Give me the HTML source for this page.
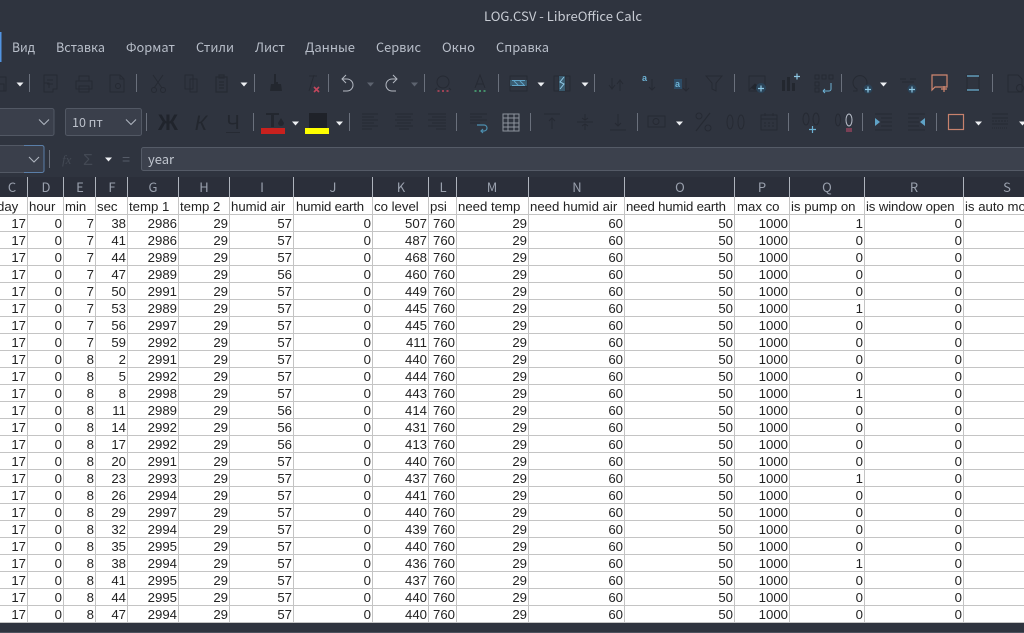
<!DOCTYPE html>
<html lang="ru"><head><meta charset="utf-8"><title>LOG.CSV - LibreOffice Calc</title>
<style>
html,body{margin:0;padding:0;width:1024px;height:633px;overflow:hidden;background:#2f343f}
#gridwrap{position:absolute;left:0;top:197px;width:1024px;height:426px;overflow:hidden;background:#fff}
table{position:absolute;left:-4px;top:0;border-collapse:separate;border-spacing:0;table-layout:fixed;width:1064px;font:13.2px/14px "Liberation Sans",sans-serif;color:#222}
td{box-sizing:border-box;height:17px;padding:2px 1px 0 1px;border-right:1px solid #c4c4c4;border-bottom:1px solid #c4c4c4;text-align:right;white-space:nowrap;overflow:hidden;vertical-align:top}
tr.h td{height:18px;text-align:left;padding-top:3px}
svg{position:absolute;left:0;top:0}
.i{fill:none;stroke:#262a33;stroke-width:1}
.s{fill:#23272f;stroke:none}
.sep{stroke:#6a707c;stroke-width:1}
.dd{fill:#eef0f3}
.ddd{fill:#5d636f}
.m{font:13px "Noto Sans CJK JP","Liberation Sans",sans-serif;fill:#b8bec9}
.hd{font:13px "Noto Sans CJK JP","Liberation Sans",sans-serif;fill:#99a0ad;text-anchor:middle}
</style></head><body>
<div id="gridwrap"><table>
<colgroup><col style="width:32px"><col style="width:36px"><col style="width:32px"><col style="width:32px"><col style="width:51px"><col style="width:51px"><col style="width:64px"><col style="width:79px"><col style="width:56px"><col style="width:28px"><col style="width:72px"><col style="width:96px"><col style="width:110px"><col style="width:55px"><col style="width:75px"><col style="width:99px"><col style="width:100px"></colgroup>
<tr class="h"><td>day</td><td>hour</td><td>min</td><td>sec</td><td>temp 1</td><td>temp 2</td><td>humid air</td><td style="letter-spacing:-.15px;padding-left:2px">humid earth</td><td>co level</td><td>psi</td><td>need temp</td><td>need humid air</td><td style="letter-spacing:-.18px">need humid earth</td><td style="padding-left:2px">max co</td><td>is pump on</td><td style="letter-spacing:-.12px">is window open</td><td>is auto mode</td></tr>
<tr><td>17</td><td>0</td><td>7</td><td>38</td><td>2986</td><td>29</td><td>57</td><td>0</td><td>507</td><td>760</td><td>29</td><td>60</td><td>50</td><td>1000</td><td>1</td><td>0</td><td></td></tr>
<tr><td>17</td><td>0</td><td>7</td><td>41</td><td>2986</td><td>29</td><td>57</td><td>0</td><td>487</td><td>760</td><td>29</td><td>60</td><td>50</td><td>1000</td><td>0</td><td>0</td><td></td></tr>
<tr><td>17</td><td>0</td><td>7</td><td>44</td><td>2989</td><td>29</td><td>57</td><td>0</td><td>468</td><td>760</td><td>29</td><td>60</td><td>50</td><td>1000</td><td>0</td><td>0</td><td></td></tr>
<tr><td>17</td><td>0</td><td>7</td><td>47</td><td>2989</td><td>29</td><td>56</td><td>0</td><td>460</td><td>760</td><td>29</td><td>60</td><td>50</td><td>1000</td><td>0</td><td>0</td><td></td></tr>
<tr><td>17</td><td>0</td><td>7</td><td>50</td><td>2991</td><td>29</td><td>57</td><td>0</td><td>449</td><td>760</td><td>29</td><td>60</td><td>50</td><td>1000</td><td>0</td><td>0</td><td></td></tr>
<tr><td>17</td><td>0</td><td>7</td><td>53</td><td>2989</td><td>29</td><td>57</td><td>0</td><td>445</td><td>760</td><td>29</td><td>60</td><td>50</td><td>1000</td><td>1</td><td>0</td><td></td></tr>
<tr><td>17</td><td>0</td><td>7</td><td>56</td><td>2997</td><td>29</td><td>57</td><td>0</td><td>445</td><td>760</td><td>29</td><td>60</td><td>50</td><td>1000</td><td>0</td><td>0</td><td></td></tr>
<tr><td>17</td><td>0</td><td>7</td><td>59</td><td>2992</td><td>29</td><td>57</td><td>0</td><td>411</td><td>760</td><td>29</td><td>60</td><td>50</td><td>1000</td><td>0</td><td>0</td><td></td></tr>
<tr><td>17</td><td>0</td><td>8</td><td>2</td><td>2991</td><td>29</td><td>57</td><td>0</td><td>440</td><td>760</td><td>29</td><td>60</td><td>50</td><td>1000</td><td>0</td><td>0</td><td></td></tr>
<tr><td>17</td><td>0</td><td>8</td><td>5</td><td>2992</td><td>29</td><td>57</td><td>0</td><td>444</td><td>760</td><td>29</td><td>60</td><td>50</td><td>1000</td><td>0</td><td>0</td><td></td></tr>
<tr><td>17</td><td>0</td><td>8</td><td>8</td><td>2998</td><td>29</td><td>57</td><td>0</td><td>443</td><td>760</td><td>29</td><td>60</td><td>50</td><td>1000</td><td>1</td><td>0</td><td></td></tr>
<tr><td>17</td><td>0</td><td>8</td><td>11</td><td>2989</td><td>29</td><td>56</td><td>0</td><td>414</td><td>760</td><td>29</td><td>60</td><td>50</td><td>1000</td><td>0</td><td>0</td><td></td></tr>
<tr><td>17</td><td>0</td><td>8</td><td>14</td><td>2992</td><td>29</td><td>56</td><td>0</td><td>431</td><td>760</td><td>29</td><td>60</td><td>50</td><td>1000</td><td>0</td><td>0</td><td></td></tr>
<tr><td>17</td><td>0</td><td>8</td><td>17</td><td>2992</td><td>29</td><td>56</td><td>0</td><td>413</td><td>760</td><td>29</td><td>60</td><td>50</td><td>1000</td><td>0</td><td>0</td><td></td></tr>
<tr><td>17</td><td>0</td><td>8</td><td>20</td><td>2991</td><td>29</td><td>57</td><td>0</td><td>440</td><td>760</td><td>29</td><td>60</td><td>50</td><td>1000</td><td>0</td><td>0</td><td></td></tr>
<tr><td>17</td><td>0</td><td>8</td><td>23</td><td>2993</td><td>29</td><td>57</td><td>0</td><td>437</td><td>760</td><td>29</td><td>60</td><td>50</td><td>1000</td><td>1</td><td>0</td><td></td></tr>
<tr><td>17</td><td>0</td><td>8</td><td>26</td><td>2994</td><td>29</td><td>57</td><td>0</td><td>441</td><td>760</td><td>29</td><td>60</td><td>50</td><td>1000</td><td>0</td><td>0</td><td></td></tr>
<tr><td>17</td><td>0</td><td>8</td><td>29</td><td>2997</td><td>29</td><td>57</td><td>0</td><td>440</td><td>760</td><td>29</td><td>60</td><td>50</td><td>1000</td><td>0</td><td>0</td><td></td></tr>
<tr><td>17</td><td>0</td><td>8</td><td>32</td><td>2994</td><td>29</td><td>57</td><td>0</td><td>439</td><td>760</td><td>29</td><td>60</td><td>50</td><td>1000</td><td>0</td><td>0</td><td></td></tr>
<tr><td>17</td><td>0</td><td>8</td><td>35</td><td>2995</td><td>29</td><td>57</td><td>0</td><td>440</td><td>760</td><td>29</td><td>60</td><td>50</td><td>1000</td><td>0</td><td>0</td><td></td></tr>
<tr><td>17</td><td>0</td><td>8</td><td>38</td><td>2994</td><td>29</td><td>57</td><td>0</td><td>436</td><td>760</td><td>29</td><td>60</td><td>50</td><td>1000</td><td>1</td><td>0</td><td></td></tr>
<tr><td>17</td><td>0</td><td>8</td><td>41</td><td>2995</td><td>29</td><td>57</td><td>0</td><td>437</td><td>760</td><td>29</td><td>60</td><td>50</td><td>1000</td><td>0</td><td>0</td><td></td></tr>
<tr><td>17</td><td>0</td><td>8</td><td>44</td><td>2995</td><td>29</td><td>57</td><td>0</td><td>440</td><td>760</td><td>29</td><td>60</td><td>50</td><td>1000</td><td>0</td><td>0</td><td></td></tr>
<tr><td>17</td><td>0</td><td>8</td><td>47</td><td>2994</td><td>29</td><td>57</td><td>0</td><td>440</td><td>760</td><td>29</td><td>60</td><td>50</td><td>1000</td><td>0</td><td>0</td><td></td></tr>
<tr><td>&nbsp;</td><td></td><td></td><td></td><td></td><td></td><td></td><td></td><td></td><td></td><td></td><td></td><td></td><td></td><td></td><td></td><td></td></tr>
</table></div>

<svg width="1024" height="633" viewBox="0 0 1024 633" xmlns="http://www.w3.org/2000/svg">
<rect x="0" y="632" width="1024" height="1" fill="#4d525e"/>
<text x="484" y="21" textLength="158" lengthAdjust="spacingAndGlyphs" style="font:12.5px 'Noto Sans CJK JP','Liberation Sans',sans-serif;fill:#c8ccd4">LOG.CSV - LibreOffice Calc</text>
<rect x="0" y="32" width="1.5" height="30" fill="#5294e2"/>
<g class="m">
<text x="12" y="52" textLength="23" lengthAdjust="spacingAndGlyphs" class="m">Вид</text>
<text x="56" y="52" textLength="49" lengthAdjust="spacingAndGlyphs" class="m">Вставка</text>
<text x="126" y="52" textLength="49" lengthAdjust="spacingAndGlyphs" class="m">Формат</text>
<text x="196" y="52" textLength="38" lengthAdjust="spacingAndGlyphs" class="m">Стили</text>
<text x="255" y="52" textLength="30" lengthAdjust="spacingAndGlyphs" class="m">Лист</text>
<text x="305" y="52" textLength="50" lengthAdjust="spacingAndGlyphs" class="m">Данные</text>
<text x="376" y="52" textLength="45" lengthAdjust="spacingAndGlyphs" class="m">Сервис</text>
<text x="442" y="52" textLength="33" lengthAdjust="spacingAndGlyphs" class="m">Окно</text>
<text x="496" y="52" textLength="53" lengthAdjust="spacingAndGlyphs" class="m">Справка</text>
</g>

<g class="sep">
<path d="M29.5 74v18M136.5 74v18M254.5 74v18M328.5 74v18M424.5 74v18M498.5 74v18M594.5 74v18M734.5 74v18M841.5 74v18M992.5 74v18"/>
<path d="M146.5 113v18M253.5 113v18M349.5 113v18M456.5 113v18M530.5 113v18M637.5 113v18M788.5 113v18M862.5 113v18M936.5 113v18"/>
<path d="M49.5 150v18"/>
</g>

<g class="dd">
<path d="M16.5 82.5h7l-3.500 4z"/><path d="M240.500 82.500h7l-3.500 4z"/><path d="M537.500 82.500h7l-3.500 4z"/><path d="M581.500 82.500h7l-3.500 4z"/><path d="M880 82.500h7l-3.500 4z"/>
<path d="M292 121.500h7l-3.500 4z"/><path d="M336 121.500h7l-3.500 4z"/><path d="M676 121.500h7l-3.500 4z"/><path d="M975 121.500h7l-3.500 4z"/><path d="M1019 121.500h7l-3.500 4z"/>
<path d="M105 157.500h7l-3.500 4z"/>
</g>
<g class="ddd"><path d="M367 82.500h7l-3.500 4z"/><path d="M411 82.500h7l-3.500 4z"/></g>

<g class="i">
<path d="M-2 77h8v14h-8M0 84h4v7h-4"/>
<path d="M44 75h13v14h-4v3h-9zM47 80h6M47 84h6M44 83h5v5"/>
<path d="M79 76h10v5H79zM76 81h16v8H76zM79 86h10v6H79z"/>
<path d="M110 75h10l4 4v13h-14zM120 75v4h4"/><circle cx="118" cy="86" r="2.500"/>
<path d="M153 75l9 13M163 75l-9 13"/><circle cx="154" cy="90" r="2.500"/><circle cx="163" cy="90" r="2.500"/>
<path d="M185 75h8v14h-8zM190 79h7v13h-7z"/>
<path d="M216 77h11v15h-11zM219 75h5v3h-5zM219 82h5M219 85h5M219 88h5" stroke-width="1.200"/>
</g>
<path class="s" d="M274 74h2v8h2v2h3l1 7h-12l1-7h3z"/>
<path class="i" d="M314 75l-5 16M309 76h8"/>
<path d="M314 87l5 5M319 87l-5 5" stroke="#c2475d" stroke-width="1.600" fill="none"/>
<path d="M346 75l-4 4 4 4M342 79h5a6 6 0 0 1 0 12h-4" fill="none" stroke="#b4b9c2" stroke-width="1"/>
<path d="M393 75l4 4-4 4M397 79h-5a6 6 0 0 0 0 12h4" fill="none" stroke="#b4b9c2" stroke-width="1"/>
<circle class="i" cx="443" cy="82" r="6"/><path class="i" d="M437 88l-2 2M449 88l2 2"/>
<path d="M437.500 91h2M442 91h2M446.500 91h2" stroke="#c2475d" stroke-width="1.500"/>
<path class="i" d="M475 88l5-13 5 13M477 84h6"/>
<path d="M474.500 91h2M479 91h2M483.500 91h2" stroke="#4caf7a" stroke-width="1.500"/>
<path class="i" d="M510 76h17v15h-17zM510 81h17M510 86h17"/>
<rect x="510" y="80" width="17" height="6" fill="#4c8fb0" opacity=".45"/>
<path d="M512 80.500h13M512 85.500h13M514 81l4 4M520 81l4 4" stroke="#5fa3c7" fill="none"/>
<path class="i" d="M554 76h16v15h-16zM559 76v15M565 76v15"/>
<rect x="559" y="76" width="6" height="15" fill="#4c8fb0" opacity=".45"/>
<path d="M560 89l4-5-4-2 4-5" stroke="#8ec8e4" fill="none"/>
<path class="i" d="M612 78v11M609 85l3 4 3-4M620 91V80M617 84l3-4 3 4"/>
<text x="642" y="81" style="font:bold 9px 'Liberation Sans',sans-serif;fill:#6db2d4">a</text>
<path class="i" d="M652 79v11M649 87l3 3 3-3"/>
<rect x="674" y="79" width="8" height="10" fill="#2d4c66"/>
<text x="675" y="87" style="font:bold 9px 'Liberation Sans',sans-serif;fill:#6db2d4">a</text>
<path class="i" d="M686 78v13M683 88l3 3 3-3"/>
<path class="i" d="M706 76h16l-6 7v8l-4-2v-6z"/>
<path class="i" d="M749 76h16v15h-16zM749 90l6-6 4 3"/>
<path class="s" d="M751 88l4-4 3 3-3 3z"/>
<circle cx="761" cy="88" r="5" fill="#2a4358"/><path d="M758 88.500h6M761 85.500v6" stroke="#8ec8e4" stroke-width="1.200"/>
<path class="s" d="M782 80h3v11h-3zM787 77h3v14h-3zM792 83h3v8h-3z"/>
<path d="M794 76.500h6M797 73.500v6" stroke="#8ec8e4" stroke-width="1.200"/>
<path class="i" d="M815 75h4v4h-4zM822 75h4v4h-4zM829 75h4v4h-4zM815 82h4v4h-4zM815 88h4v4h-4z"/>
<path d="M823 91h6a2 2 0 0 0 2-2v-6M823 91l2-2M823 91l2 2" stroke="#6db2d4" fill="none"/>
<path class="i" d="M853 91h4v-2a7 7 0 1 1 6 0v2h4" stroke-width="1.400"/>
<circle cx="868" cy="89" r="4.500" fill="#2a4358"/><path d="M865 89.500h6M868 86.500v6" stroke="#8ec8e4" stroke-width="1.200"/>
<path class="i" d="M900 79h6M910 79h6M902 82h12"/>
<circle cx="912" cy="89" r="4.500" fill="#2a4358"/><path d="M909 89.500h6M912 86.500v6" stroke="#8ec8e4" stroke-width="1.200"/>
<path d="M932 75h15v12h-12l-3 3z" fill="none" stroke="#d08770" stroke-width="1.200"/>
<path d="M941 89h6M944 86v6" stroke="#d08770" stroke-width="1.200"/>
<path class="i" d="M967 75h12v16h-12z"/>
<path d="M967 76h12M967 90h12" stroke="#6db2d4" stroke-width="1.200"/>
<path class="i" d="M1008 75h10l4 4v13h-14z"/><circle class="i" cx="1020" cy="88" r="3.500"/>

<rect x="-3" y="108.500" width="57" height="27" rx="2" fill="#3a3f4b" stroke="#525864"/>
<path d="M39 119.500l5 5 5-5" fill="none" stroke="#aeb4bf" stroke-width="1.100"/>
<rect x="65.500" y="108.500" width="76" height="27" rx="2" fill="#3a3f4b" stroke="#525864"/>
<text x="72" y="127" style="font:12.5px 'Noto Sans CJK JP','Liberation Sans',sans-serif;fill:#bcc1cb">10 пт</text>
<path d="M126 119.500l5 5 5-5" fill="none" stroke="#aeb4bf" stroke-width="1.100"/>

<text x="168" y="130" text-anchor="middle" style="font:bold 22px 'Liberation Sans',sans-serif;fill:#20242c">Ж</text>
<text x="201" y="130" text-anchor="middle" style="font:italic 21px 'Liberation Sans',sans-serif;fill:#23272f">К</text>
<text x="233" y="129" text-anchor="middle" style="font:20px 'Liberation Sans',sans-serif;fill:#23272f">Ч</text>
<path class="i" d="M226 132.500h14"/>
<path class="s" d="M266 113h13v2h-5v12h-3v-12h-5z"/><path class="s" d="M281 118l3 5a3 3 0 0 1-6 0z"/>
<rect x="261" y="128" width="24" height="6" fill="#c9211e"/>
<rect x="309" y="113" width="18" height="15" fill="#1f2229"/>
<rect x="305" y="128" width="24" height="6" fill="#ffff00"/>
<g class="i">
<path d="M362 114h16M362 117h12M362 120h16M362 123h12M362 126h16M362 129h10"/>
<path d="M395 114h18M397 117h14M395 120h18M397 123h14M395 126h18M399 129h10"/>
<path d="M428 114h18M432 117h14M428 120h18M432 123h14M428 126h18M436 129h10"/>
<path d="M470 114h17M470 117h12M470 120h17M470 123h10"/>
</g>
<path d="M477 125h7a3 3 0 0 1 0 6h-3M483 129l-2 2 2 2" fill="none" stroke="#4c8fb0" stroke-width="1.200"/>
<path d="M503 114h16v17h-16zM503 118h16M503 123h16M503 127h16M508 114v17M514 114v17" fill="none" stroke="#8d939e" stroke-width="1"/>
<g class="i">
<path d="M544 114h16M552 118v11M549 121l3-3 3 3"/>
<path d="M577 122h16M585 114v6M582 118l3 2 3-2M585 130v-6M582 126l3-2 3 2"/>
<path d="M610 130h16M618 114v12M615 123l3 3 3-3"/>
<path d="M648 116h17v11h-17z"/></g>
<circle class="i" cx="656" cy="121.500" r="3"/>
<g class="i">
<path d="M696 131l14-18" stroke-width="1.200"/><circle cx="699" cy="116" r="3"/><circle cx="708" cy="128" r="3"/>
<ellipse cx="730" cy="122" rx="3" ry="7"/><ellipse cx="741" cy="122" rx="3" ry="7"/>
<path d="M761 115h16v15h-16zM761 119h16M765 113v3M773 113v3"/>
<path d="M764 123h2M768 123h2M772 123h2M764 126h2M768 126h2M772 126h2"/>
<ellipse cx="806" cy="119" rx="3" ry="6"/><ellipse cx="816" cy="119" rx="3" ry="6"/>
<ellipse cx="838" cy="120" rx="2.500" ry="6"/>
</g>
<path d="M809 129.500h7M812.500 126v7" stroke="#6db2d4" stroke-width="1.200"/>
<ellipse cx="849" cy="120" rx="3" ry="6" fill="none" stroke="#b8bec9"/>
<path d="M846 128h6v4h-6z" fill="#7a3f55"/>
<g class="i">
<path d="M875 114h17M881 118h11M881 122h11M881 126h11M875 130h17"/>
<path d="M908 114h17M908 118h11M908 122h11M908 126h11M908 130h17"/>
</g>
<path d="M875 118l5 4-5 4z" fill="#5fa3c7"/><path d="M925 118l-5 4 5 4z" fill="#5fa3c7"/>
<rect x="948.500" y="114.500" width="15" height="15" fill="none" stroke="#c8826d" stroke-width="1.200"/>
<g class="i"><path d="M992 114h16M992 118h16M992 124h16" /><path d="M992 121h16" stroke-dasharray="2 1"/><path d="M992 128h16" stroke-dasharray="1 1"/></g>

<rect x="-3" y="145.500" width="47" height="27" rx="2" fill="#3a3f4b" stroke="#525864"/>
<path d="M24 145.500h18a2 2 0 0 1 2 2v23a2 2 0 0 1-2 2h-18" fill="none" stroke="#5a7ea8"/>
<path d="M29 157l5 5 5-5" fill="none" stroke="#aeb4bf" stroke-width="1.100"/>
<text x="62" y="164" style="font:italic 13px 'Liberation Serif',serif;fill:#434954">fx</text>
<text x="83" y="165" style="font:16px 'Liberation Sans',sans-serif;fill:#434954">Σ</text>
<text x="122" y="164" style="font:14px 'Liberation Sans',sans-serif;fill:#565c68">=</text>
<rect x="141.500" y="147.500" width="890" height="23" rx="2" fill="#3c414d" stroke="#555b67"/>
<text x="148" y="164" style="font:13px 'Noto Sans CJK JP','Liberation Sans',sans-serif;fill:#c0c5ce">year</text>

<rect x="0" y="177" width="1024" height="20" fill="#2b2f3a"/>
<path d="M27.500 177v20M63.500 177v20M95.500 177v20M127.500 177v20M178.500 177v20M229.500 177v20M293.500 177v20M372.500 177v20M428.500 177v20M456.500 177v20M528.500 177v20M624.500 177v20M734.500 177v20M789.500 177v20M864.500 177v20M963.500 177v20" stroke="#aeb3bc"/>
<text x="12" y="192" class="hd">C</text><text x="46" y="192" class="hd">D</text><text x="80" y="192" class="hd">E</text><text x="112" y="192" class="hd">F</text><text x="153" y="192" class="hd">G</text><text x="204" y="192" class="hd">H</text><text x="262" y="192" class="hd">I</text><text x="333" y="192" class="hd">J</text><text x="401" y="192" class="hd">K</text><text x="443" y="192" class="hd">L</text><text x="492" y="192" class="hd">M</text><text x="577" y="192" class="hd">N</text><text x="680" y="192" class="hd">O</text><text x="762" y="192" class="hd">P</text><text x="827" y="192" class="hd">Q</text><text x="914" y="192" class="hd">R</text><text x="1007" y="192" class="hd">S</text>
</svg>
</body></html>
